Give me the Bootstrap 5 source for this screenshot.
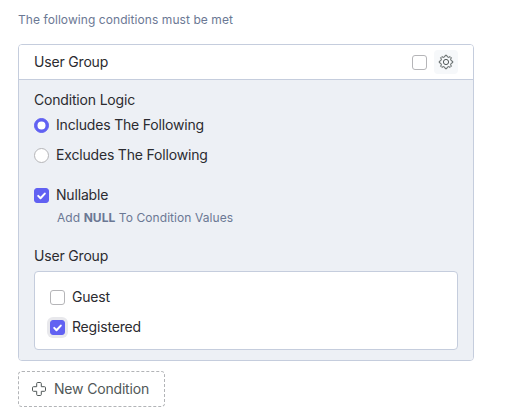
<!DOCTYPE html>
<html lang="en">
<head>
<meta charset="utf-8">
<meta name="viewport" content="width=device-width, initial-scale=1">
<title>Conditions</title>
<link href="https://cdn.jsdelivr.net/npm/bootstrap@5.3.0/dist/css/bootstrap.min.css" rel="stylesheet">
<style>
body{font-family:Inter,"Liberation Sans",sans-serif;font-size:14px;line-height:20px;letter-spacing:-.18px;color:#2b2b30;background:#fff;overflow:hidden}
.rules{width:474px;padding:10px 0 0 18px}
.intro{font-size:12px;letter-spacing:.07px;color:#6b7894;margin-bottom:14px}
.rule-card{--bs-card-border-color:#c5cddd;--bs-card-border-radius:4px;--bs-card-inner-border-radius:3px;height:317px;color:inherit}
.rule-card .card-header{height:36px;padding:0 15px;background:#fff}
.rule-card .card-body{background:#edf0f5;padding:10px 15px;border-radius:0 0 3px 3px}
.choice{min-height:30px;margin:0;padding:0;gap:7px}
.choice .form-check-input,.toggle{width:15px;height:15px;margin:0;float:none;flex:none;border:1px solid #b5b5b8;background-color:#fff}
.choice .form-check-input[type=checkbox],.toggle{border-radius:3px!important}
.choice .form-check-input:checked{background-color:#6161f2;border-color:#6161f2;background-size:13px 13px}
.choice .form-check-input[type=checkbox]:checked{background-image:url("data:image/svg+xml,%3csvg xmlns='http://www.w3.org/2000/svg' viewBox='0 0 13 13'%3e%3cpath fill='none' stroke='%23fff' stroke-width='2' stroke-linecap='round' stroke-linejoin='round' d='M3.2 6.9l2.3 2.3 4.3-4.6'/%3e%3c/svg%3e")}
.choice .form-check-input[type=radio]:checked{background-image:url("data:image/svg+xml,%3csvg xmlns='http://www.w3.org/2000/svg' viewBox='0 0 13 13'%3e%3ccircle cx='6.5' cy='6.5' r='4' fill='%23fff'/%3e%3c/svg%3e")}
.choice .form-check-input.ringed{box-shadow:0 0 0 3px #e8e8ec}
.nullable{margin-top:10px}
.hint{font-size:12px;letter-spacing:.07px;color:#6b7894;padding-left:23px;margin-top:-2px;margin-bottom:18px}
.values{border:1px solid #c5cddd;border-radius:4px;height:79px;padding:10px 15px;margin-top:5px}
.toolset{gap:7px}
.gear{width:24px;height:24px;padding:0;border:0;border-radius:4px;background:#f6f8fa;color:#515858}
.add{width:147px;height:36px;margin-top:10px;padding:0 0 1px 12px;gap:7px;border:1px dashed #b2b4b7;border-radius:4px;font-size:14px;letter-spacing:-.18px;color:#515858}
</style>
</head>
<body>
<main class="rules">
  <div class="intro">The following conditions must be met</div>
  <section class="card rule-card">
    <div class="card-header d-flex align-items-center justify-content-between">
      <span>User Group</span>
      <div class="d-flex align-items-center toolset">
        <input class="form-check-input toggle" type="checkbox" aria-label="Select condition">
        <button class="btn gear d-flex align-items-center justify-content-center" type="button" aria-label="Settings">
          <svg width="16" height="16" viewBox="0 0 16 16" fill="none" stroke="currentColor" stroke-width="1" stroke-linejoin="round"><path d="M6.9 2.7 7.2 1.3H8.8L9.1 2.7 10.9 3.4 12.1 2.6 13.4 3.9 12.6 5.1 13.3 6.9 14.7 7.2V8.8L13.3 9.1 12.6 10.9 13.4 12.1 12.1 13.4 10.9 12.6 9.1 13.3 8.8 14.7H7.2L6.9 13.3 5.1 12.6 3.9 13.4 2.6 12.1 3.4 10.9 2.7 9.1 1.3 8.8V7.2L2.7 6.9 3.4 5.1 2.6 3.9 3.9 2.6 5.1 3.4Z"/><circle cx="8" cy="8" r="2.6"/></svg>
        </button>
      </div>
    </div>
    <div class="card-body">
      <div>Condition Logic</div>
      <div class="form-check choice d-flex align-items-center">
        <input class="form-check-input" type="radio" name="logic" id="inc" checked>
        <label class="form-check-label" for="inc">Includes The Following</label>
      </div>
      <div class="form-check choice d-flex align-items-center">
        <input class="form-check-input" type="radio" name="logic" id="exc">
        <label class="form-check-label" for="exc">Excludes The Following</label>
      </div>
      <div class="form-check choice d-flex align-items-center nullable">
        <input class="form-check-input" type="checkbox" id="nul" checked>
        <label class="form-check-label" for="nul">Nullable</label>
      </div>
      <div class="hint">Add <strong>NULL</strong> To Condition Values</div>
      <div>User Group</div>
      <div class="values bg-white">
        <div class="form-check choice d-flex align-items-center">
          <input class="form-check-input" type="checkbox" id="gst">
          <label class="form-check-label" for="gst">Guest</label>
        </div>
        <div class="form-check choice d-flex align-items-center">
          <input class="form-check-input ringed" type="checkbox" id="reg" checked>
          <label class="form-check-label" for="reg">Registered</label>
        </div>
      </div>
    </div>
  </section>
  <button class="btn add d-flex align-items-center" type="button">
    <svg width="16" height="16" viewBox="0 0 16 16" fill="none" stroke="currentColor" stroke-width="1" stroke-linejoin="round"><path d="M6.7 1.5H9.3Q10.3 1.5 10.3 2.5V5.7H13.5Q14.5 5.7 14.5 6.7V9.3Q14.5 10.3 13.5 10.3H10.3V13.5Q10.3 14.5 9.3 14.5H6.7Q5.7 14.5 5.7 13.5V10.3H2.5Q1.5 10.3 1.5 9.3V6.7Q1.5 5.7 2.5 5.7H5.7V2.5Q5.7 1.5 6.7 1.5Z"/></svg>
    <span>New Condition</span>
  </button>
</main>
<script src="https://cdn.jsdelivr.net/npm/bootstrap@5.3.0/dist/js/bootstrap.bundle.min.js"></script>
</body>
</html>
